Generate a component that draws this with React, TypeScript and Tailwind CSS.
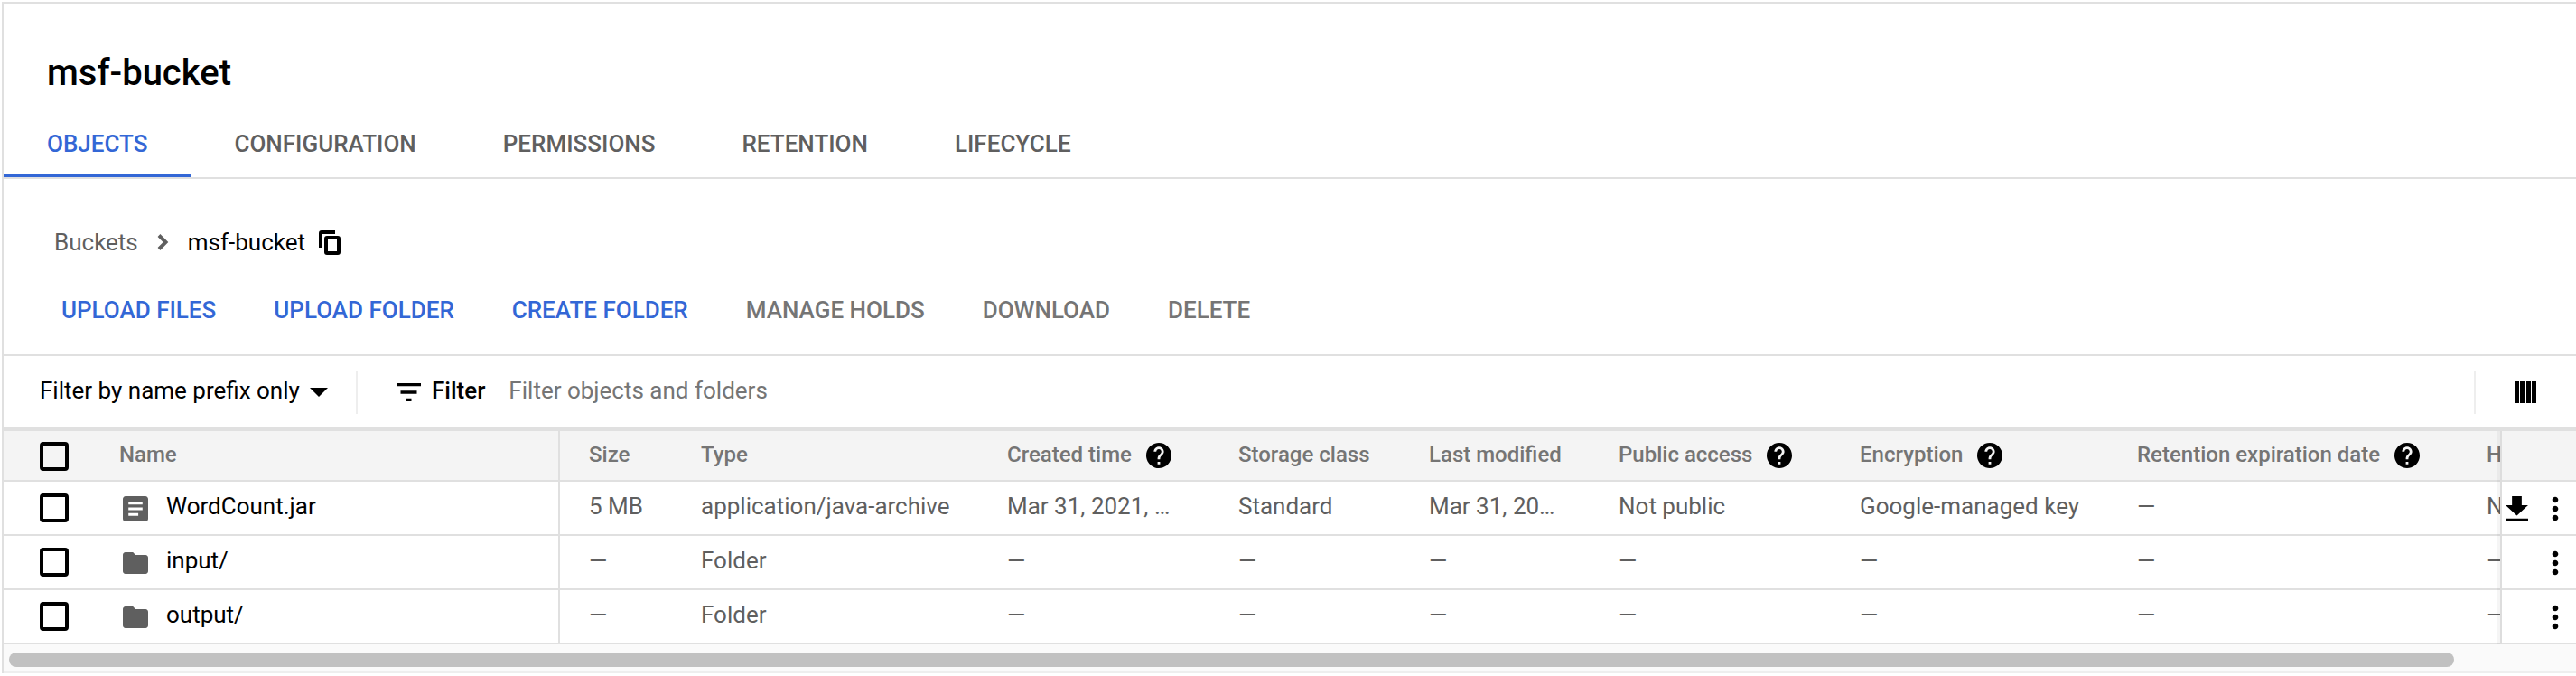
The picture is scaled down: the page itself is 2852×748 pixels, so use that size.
import React from "react";

const rowGrid =
  "grid grid-cols-[128px_488px_156px_339px_256px_211px_210px_267px_307px_387px_100px]";

const HELP =
  "M12 2C6.48 2 2 6.48 2 12s4.48 10 10 10 10-4.48 10-10S17.52 2 12 2zm1 17h-2v-2h2v2zm2.07-7.75l-.9.92C13.45 12.9 13 13.5 13 15h-2v-.5c0-1.1.45-2.1 1.17-2.83l1.24-1.26c.37-.36.59-.86.59-1.41 0-1.1-.9-2-2-2s-2 .9-2 2H8c0-2.21 1.79-4 4-4s4 1.79 4 4c0 .88-.36 1.68-.93 2.25z";

function HelpIcon() {
  return (
    <svg viewBox="2 2 20 20" className="h-[28px] w-[28px] shrink-0 fill-black">
      <path d={HELP} />
    </svg>
  );
}

function Checkbox() {
  return <div className="h-[32px] w-[32px] rounded-[4px] border-[4px] border-black" />;
}

function FileIcon() {
  return (
    <svg viewBox="3 3 18 18" className="mt-[2px] h-[28px] w-[28px] shrink-0 fill-[#5f5f5f]">
      <path d="M19 3H5c-1.1 0-2 .9-2 2v14c0 1.1.9 2 2 2h14c1.1 0 2-.9 2-2V5c0-1.1-.9-2-2-2zm-5 14H7v-2h7v2zm3-4H7v-2h10v2zm0-4H7V7h10v2z" />
    </svg>
  );
}

function FolderIcon() {
  return (
    <svg viewBox="2 4 20 16" className="mt-[2px] h-[24px] w-[28px] shrink-0 fill-[#5f5f5f]" preserveAspectRatio="none">
      <path d="M10 4H4c-1.1 0-1.99.9-1.99 2L2 18c0 1.1.9 2 2 2h16c1.1 0 2-.9 2-2V8c0-1.1-.9-2-2-2h-8l-2-2z" />
    </svg>
  );
}

function MoreIcon() {
  return (
    <svg viewBox="9 4 6 16" className="h-[28px] w-[10px] fill-black">
      <path d="M12 8c1.1 0 2-.9 2-2s-.9-2-2-2-2 .9-2 2 .9 2 2 2zm0 2c-1.1 0-2 .9-2 2s.9 2 2 2 2-.9 2-2-.9-2-2-2zm0 6c-1.1 0-2 .9-2 2s.9 2 2 2 2-.9 2-2-.9-2-2-2z" />
    </svg>
  );
}

function DownloadIcon() {
  return (
    <svg viewBox="5 3 14 17" className="h-[28px] w-[25px] fill-black" preserveAspectRatio="none">
      <path d="M19 9h-4V3H9v6H5l7 7 7-7zM5 18v2h14v-2H5z" />
    </svg>
  );
}

const headers = [
  { label: "Size" },
  { label: "Type" },
  { label: "Created time", help: true },
  { label: "Storage class" },
  { label: "Last modified" },
  { label: "Public access", help: true },
  { label: "Encryption", help: true },
  { label: "Retention expiration date", help: true },
  { label: "Hold" },
];

const rows = [
  {
    name: "WordCount.jar",
    file: true,
    cells: ["5 MB", "application/java-archive", "Mar 31, 2021, …", "Standard", "Mar 31, 20…", "Not public", "Google-managed key", "—", "None"],
  },
  {
    name: "input/",
    file: false,
    cells: ["—", "Folder", "—", "—", "—", "—", "—", "—", "—"],
  },
  {
    name: "output/",
    file: false,
    cells: ["—", "Folder", "—", "—", "—", "—", "—", "—", "—"],
  },
];

export default function App() {
  return (
    <div className="h-[748px] w-full overflow-hidden bg-white pl-[2px] pt-[2px] font-['Roboto',sans-serif]">
      <div className="border-l-2 border-t-2 border-[#e0e0e0]">
        <div className="flex h-[114px] items-start pl-[48px] pt-[54px]">
          <h1 className="text-[40px] leading-[46px] font-medium text-black">msf-bucket</h1>
        </div>

        {/* tabs */}
        <div className="flex h-[80px] border-b-2 border-[#e0e0e0] text-[26px] font-medium text-[#5f5f5f]">
          <div className="flex items-center border-b-4 border-[#3367d6] px-12 pt-[8px] text-[#3367d6]">OBJECTS</div>
          <div className="flex items-center px-12 pt-[4px]">CONFIGURATION</div>
          <div className="flex items-center px-12 pt-[4px]">PERMISSIONS</div>
          <div className="flex items-center px-12 pt-[4px]">RETENTION</div>
          <div className="flex items-center px-12 pt-[4px]">LIFECYCLE</div>
        </div>

        {/* breadcrumb + actions */}
        <div className="h-[196px] border-b-2 border-[#e0e0e0] pt-[49px]">
          <div className="flex h-[42px] items-center pl-[56px] text-[26px]">
            <span className="text-[#5f5f5f]">Buckets</span>
            <svg viewBox="0 0 13 18" className="ml-[21px] mr-[21px] h-[18px] w-[13px] fill-none stroke-[#5f5f5f] stroke-[4px]">
              <path d="M2 1.5L9.5 9L2 16.5" />
            </svg>
            <span className="text-black">msf-bucket</span>
            <svg viewBox="0 0 24 27" className="ml-[15px] h-[27px] w-[24px] fill-none stroke-black stroke-[4px]">
              <path d="M18 2H3a1 1 0 0 0 -1 1V19" />
              <rect x="8" y="8" width="14" height="17" rx="1" />
            </svg>
          </div>
          <div className="mt-[24px] flex h-[60px] items-center pl-[32px] text-[26px] font-medium">
            <span className="px-8 text-[#3367d6]">UPLOAD FILES</span>
            <span className="px-8 text-[#3367d6]">UPLOAD FOLDER</span>
            <span className="px-8 text-[#3367d6]">CREATE FOLDER</span>
            <span className="px-8 text-[#757575]">MANAGE HOLDS</span>
            <span className="px-8 text-[#757575]">DOWNLOAD</span>
            <span className="px-8 text-[#757575]">DELETE</span>
          </div>
        </div>

        {/* filter bar */}
        <div className="flex h-[83px] items-center border-b-4 border-[#e0e0e0] text-[26px]">
          <div className="flex h-[48px] w-[392px] items-center border-r-2 border-[#eeeeee] pl-[40px] text-black">
            <span className="pb-[2px]">Filter by name prefix only</span>
            <svg viewBox="7 10 10 5" className="ml-[11px] h-[10px] w-[20px] fill-black">
              <path d="M7 10l5 5 5-5z" />
            </svg>
          </div>
          <svg viewBox="3 6 18 12" className="ml-[43px] h-[20px] w-[27px] fill-black" preserveAspectRatio="none">
            <path d="M10 18h4v-2h-4v2zM3 6v2h18V6H3zm3 7h12v-2H6v2z" />
          </svg>
          <span className="ml-[12px] pb-[2px] font-medium text-black">Filter</span>
          <span className="ml-[26px] flex-1 pb-[2px] text-[#757575]">Filter objects and folders</span>
          <div className="flex h-[48px] w-[113px] items-center justify-start border-l-2 border-[#eeeeee] pl-[43px]">
            <div className="flex h-[24px] w-[24px] justify-between">
              <div className="w-[5.25px] bg-black" />
              <div className="w-[5.25px] bg-black" />
              <div className="w-[5.25px] bg-black" />
              <div className="w-[5.25px] bg-black" />
            </div>
          </div>
        </div>

        {/* table */}
        <div className="flex">
          <div className="min-w-0 flex-1 overflow-hidden">
            <div className={`${rowGrid} h-[56px] items-center border-b-2 border-[#e0e0e0] bg-[#f4f4f4] text-[24px] font-medium text-[#757575]`}>
              <div className="flex h-full items-center pl-[40px] pt-[2px]">
                <Checkbox />
              </div>
              <div className="flex h-full items-center border-r-2 border-[#e0e0e0]">
                <span className="pb-[2px]">Name</span>
              </div>
              {headers.map((h, i) => (
                <div key={h.label} className={`flex h-full items-center whitespace-nowrap gap-[16px] ${i === 0 ? "pl-[32px]" : ""}`}>
                  <span className="pb-[2px]">{h.label}</span>
                  {h.help && <HelpIcon />}
                </div>
              ))}
            </div>
            {rows.map((row) => (
              <div key={row.name} className={`${rowGrid} h-[60px] items-center border-b-2 border-[#e0e0e0] text-[26px] text-[#5f5f5f]`}>
                <div className="flex h-full items-center pl-[40px]">
                  <Checkbox />
                </div>
                <div className="flex h-full items-center gap-[20px] border-r-2 border-[#e0e0e0] pl-[4px] text-black">
                  {row.file ? <FileIcon /> : <FolderIcon />}
                  <span className="pb-[4px]">{row.name}</span>
                </div>
                {row.cells.map((cell, i) => (
                  <div key={i} className={`flex h-full items-center whitespace-nowrap pb-[4px] ${i === 0 ? "pl-[32px]" : ""}`}>
                    {cell}
                  </div>
                ))}
              </div>
            ))}
          </div>

          {/* sticky actions column */}
          <div className="relative w-[84px] shrink-0 border-l-2 border-[#dddddd] shadow-[-4px_0_0_rgba(0,0,0,0.04)]">
            <div className="h-[56px] border-b-2 border-[#e0e0e0] bg-[#f4f4f4]" />
            {rows.map((row) => (
              <div key={row.name} className="flex h-[60px] items-center border-b-2 border-[#e0e0e0] bg-white pt-[2px]">
                <div className="ml-[4px] w-[25px]">{row.file && <DownloadIcon />}</div>
                <div className="ml-[25px]">
                  <MoreIcon />
                </div>
              </div>
            ))}
          </div>
        </div>

        {/* horizontal scrollbar */}
        <div className="h-[32px] border-b-[3px] border-[#eeeeee] bg-[#fafafa] px-[6px] pt-[9px]">
          <div className="h-[16px] w-[2707px] rounded-full bg-[#c1c1c1]" />
        </div>
      </div>
    </div>
  );
}
